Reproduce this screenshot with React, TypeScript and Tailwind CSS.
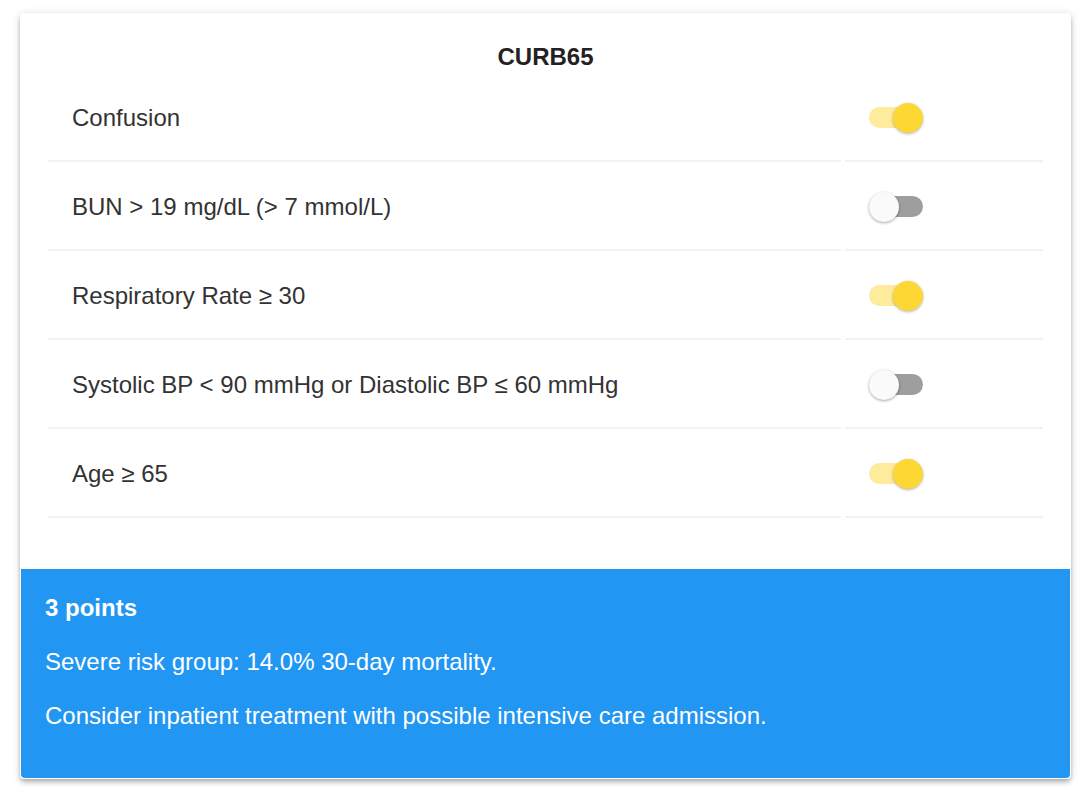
import React, { useState } from 'react';

type Item = { label: string; on: boolean };

const initial: Item[] = [
  { label: 'Confusion', on: true },
  { label: 'BUN > 19 mg/dL (> 7 mmol/L)', on: false },
  { label: 'Respiratory Rate ≥ 30', on: true },
  { label: 'Systolic BP < 90 mmHg or Diastolic BP ≤ 60 mmHg', on: false },
  { label: 'Age ≥ 65', on: true },
];

function Toggle({ on, onClick }: { on: boolean; onClick: () => void }) {
  return (
    <button type="button" onClick={onClick} className="relative w-[54px] h-[30px] flex items-center">
      <span className={on ? 'block w-[54px] h-[21px] rounded-full bg-[#feeb9c]' : 'block w-[54px] h-[21px] rounded-full bg-[#9e9e9e]'} />
      <span
        className={
          on
            ? 'absolute top-0 left-[24px] w-[30px] h-[30px] rounded-full bg-[#fdd835] shadow-[0_1px_3px_rgba(0,0,0,0.3)]'
            : 'absolute top-0 left-0 w-[30px] h-[30px] rounded-full bg-[#fafafa] shadow-[0_1px_3px_rgba(0,0,0,0.35)]'
        }
      />
    </button>
  );
}

export default function App() {
  const [items, setItems] = useState(initial);
  const score = items.filter((i) => i.on).length;

  return (
    <div className="min-h-screen bg-white pt-[13px] px-[20px] pb-[20px] font-['Liberation_Sans',Arial,sans-serif] text-[#333]">
      <div className="w-[1051px] rounded-[4px] bg-white shadow-[0_2px_4px_-1px_rgba(0,0,0,0.2),0_4px_5px_0_rgba(0,0,0,0.14),0_1px_10px_0_rgba(0,0,0,0.12)] overflow-hidden">
        <div className="px-[28px] pt-[30px] pb-[51px]">
          <h1 className="text-center text-[24px] font-bold leading-[28px] text-[#222]">CURB65</h1>
          <div className="mt-[2px]">
            {items.map((it, idx) => (
              <div key={it.label} className="flex gap-[4px] h-[89px]">
                <div className="flex-1 flex items-center pl-[24px] pt-[2px] text-[24px] border-b-2 border-[#f2f2f2]">
                  {it.label}
                </div>
                <div className="w-[198px] flex items-center pl-[24px] pt-[2px] border-b-2 border-[#f2f2f2]">
                  <Toggle
                    on={it.on}
                    onClick={() => setItems(items.map((x, j) => (j === idx ? { ...x, on: !x.on } : x)))}
                  />
                </div>
              </div>
            ))}
          </div>
        </div>
        <div className="bg-[#2196f3] text-white px-[24px] pt-[25px] pb-[48px] mx-[1px] mb-[1px] rounded-b-[4px] text-[24px] leading-[28px]">
          <p className="font-bold">{score} points</p>
          <p className="mt-[26px]">Severe risk group: 14.0% 30-day mortality.</p>
          <p className="mt-[26px]">Consider inpatient treatment with possible intensive care admission.</p>
        </div>
      </div>
    </div>
  );
}
